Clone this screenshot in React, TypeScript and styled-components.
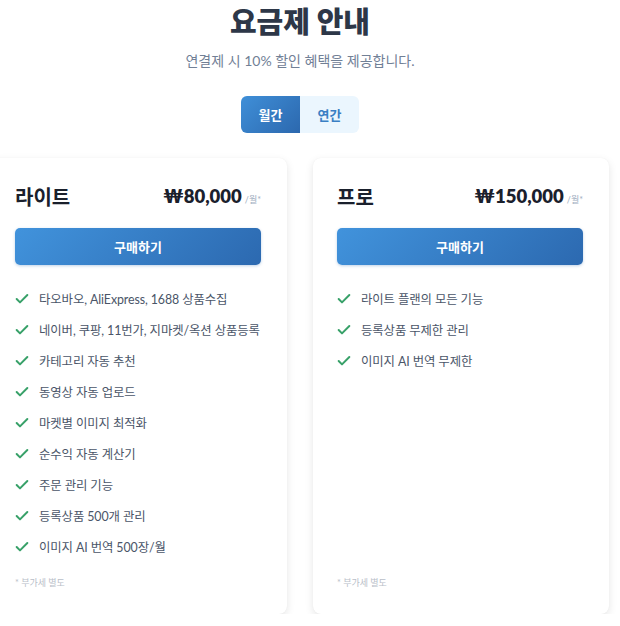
import React from "react";
import styled, { createGlobalStyle } from "styled-components";
import { Check } from "lucide-react";

const GlobalStyle = createGlobalStyle`
  html, body {
    margin: 0;
    padding: 0;
    background: #ffffff;
    overflow: hidden;
  }
  body {
    font-family: Lato, "Noto Sans CJK KR", sans-serif;
    color: #2d3748;
  }
  * { box-sizing: border-box; }
`;

const Page = styled.div`
  width: 600px;
  padding-top: 4px;
  display: flex;
  flex-direction: column;
  align-items: center;
`;

const Title = styled.h1`
  margin: 0;
  font-size: 29px;
  line-height: 36px;
  font-weight: 800;
  color: #2d3748;
`;

const Subtitle = styled.p`
  margin: 11px 0 0;
  font-size: 14px;
  line-height: 20px;
  color: #718096;
`;

const Toggle = styled.div`
  margin-top: 25px;
  display: flex;
  border-radius: 6px;
  overflow: hidden;
  background: #ebf6fe;
`;

const ToggleButton = styled.button<{ $active?: boolean }>`
  width: 59px;
  height: 37px;
  border: none;
  font-family: inherit;
  font-size: 13px;
  font-weight: 700;
  cursor: pointer;
  color: ${(p) => (p.$active ? "#ffffff" : "#3a7fc4")};
  background: ${(p) =>
    p.$active ? "linear-gradient(135deg, #3f8fd8 0%, #2c68ae 100%)" : "transparent"};
`;

const Grid = styled.div`
  margin: 25px -9px 0;
  width: 618px;
  display: grid;
  grid-template-columns: minmax(0, 1fr) minmax(0, 1fr);
  gap: 26px;
`;

const Card = styled.div`
  height: 456px;
  background: #ffffff;
  border-radius: 8px;
  box-shadow: 0 3px 8px rgba(0, 0, 0, 0.1), 0 0 1px rgba(0, 0, 0, 0.06);
  padding: 24px 26px 24px 24px;
  display: flex;
  flex-direction: column;
`;

const CardHeader = styled.div`
  height: 28px;
  display: flex;
  align-items: center;
  justify-content: space-between;
`;

const PlanName = styled.h2`
  margin: 0;
  font-size: 20px;
  font-weight: 700;
  color: #1a202c;
`;

const Price = styled.div`
  display: flex;
  align-items: baseline;
  gap: 3px;
`;

const Amount = styled.span`
  font-size: 18.5px;
  font-weight: 800;
  color: #1a202c;
`;

const Unit = styled.span`
  font-size: 9px;
  color: #a0aec0;
`;

const BuyButton = styled.button`
  margin-top: 18px;
  width: 100%;
  height: 37px;
  border: none;
  border-radius: 5px;
  font-family: inherit;
  font-size: 13px;
  font-weight: 700;
  color: #ffffff;
  background: linear-gradient(135deg, #4193dc 0%, #2c69b0 100%);
  box-shadow: 0 1px 3px rgba(44, 105, 176, 0.3);
  cursor: pointer;
`;

const Features = styled.ul`
  list-style: none;
  margin: 18px 0 0;
  padding: 0;
`;

const Feature = styled.li`
  height: 31px;
  display: flex;
  align-items: center;
  gap: 9px;
  font-size: 12.4px;
  letter-spacing: -0.1px;
  white-space: nowrap;
  color: #4a5568;
`;

const CheckIcon = styled(Check)`
  flex: none;
  color: #38a169;
  margin-left: -1px;
`;

const Footnote = styled.p`
  margin: auto 0 0;
  font-size: 9px;
  line-height: 14px;
  color: #b8bec8;
`;

type Plan = {
  name: string;
  price: string;
  features: string[];
};

const plans: Plan[] = [
  {
    name: "라이트",
    price: "₩80,000",
    features: [
      "타오바오, AliExpress, 1688 상품수집",
      "네이버, 쿠팡, 11번가, 지마켓/옥션 상품등록",
      "카테고리 자동 추천",
      "동영상 자동 업로드",
      "마켓별 이미지 최적화",
      "순수익 자동 계산기",
      "주문 관리 기능",
      "등록상품 500개 관리",
      "이미지 AI 번역 500장/월",
    ],
  },
  {
    name: "프로",
    price: "₩150,000",
    features: ["라이트 플랜의 모든 기능", "등록상품 무제한 관리", "이미지 AI 번역 무제한"],
  },
];

const App = () => {
  return (
    <>
      <GlobalStyle />
      <Page>
        <Title>요금제 안내</Title>
        <Subtitle>연결제 시 10% 할인 혜택을 제공합니다.</Subtitle>
        <Toggle>
          <ToggleButton $active>월간</ToggleButton>
          <ToggleButton>연간</ToggleButton>
        </Toggle>
        <Grid>
          {plans.map((plan) => (
            <Card key={plan.name}>
              <CardHeader>
                <PlanName>{plan.name}</PlanName>
                <Price>
                  <Amount>{plan.price}</Amount>
                  <Unit>/월*</Unit>
                </Price>
              </CardHeader>
              <BuyButton>구매하기</BuyButton>
              <Features>
                {plan.features.map((f) => (
                  <Feature key={f}>
                    <CheckIcon size={16} strokeWidth={3} />
                    {f}
                  </Feature>
                ))}
              </Features>
              <Footnote>* 부가세 별도</Footnote>
            </Card>
          ))}
        </Grid>
      </Page>
    </>
  );
};

export default App;
